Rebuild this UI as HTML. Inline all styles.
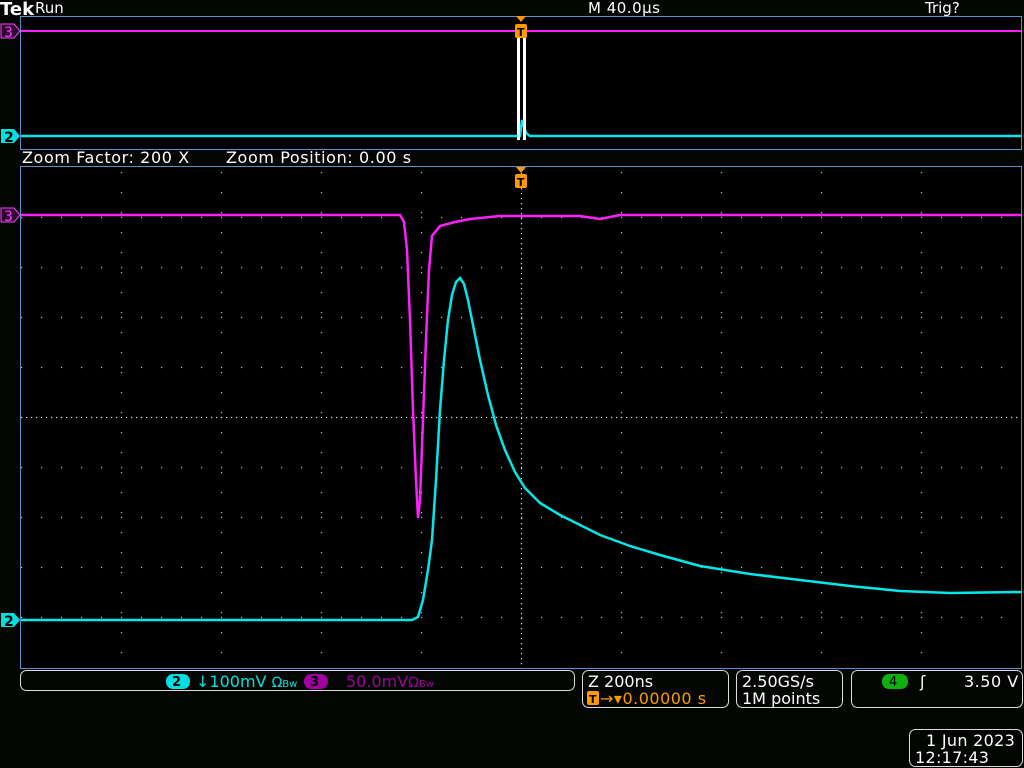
<!DOCTYPE html>
<html><head><style>
html,body{margin:0;padding:0;background:#000;width:1024px;height:768px;overflow:hidden}
svg text{font-family:"DejaVu Sans","Liberation Sans",sans-serif}
</style></head><body>
<svg width="1024" height="768" viewBox="0 0 1024 768" xmlns="http://www.w3.org/2000/svg">
<rect width="1024" height="768" fill="#020502"/>
<!-- top panel -->
<rect x="20.5" y="16.5" width="1001" height="133" fill="#000" stroke="#5a8fc8"/>
<text x="0" y="15" fill="#fff" font-size="18" font-weight="bold" font-family="Liberation Serif">Tek</text>
<text x="35" y="13" fill="#fff" font-size="15">Run</text>
<text x="588" y="13" fill="#fff" font-size="15" letter-spacing="0.5">M 40.0µs</text>
<text x="925" y="13" fill="#fff" font-size="15">Trig?</text>
<line x1="21" y1="31" x2="1021" y2="31" stroke="#ff20ff" stroke-width="2"/>
<polyline points="21,136 520,136 522,120 526,133 530,136 1021,136" fill="none" stroke="#00e8e8" stroke-width="2.5"/>
<rect x="517" y="26" width="3" height="114" fill="#fff"/><rect x="523" y="26" width="3" height="114" fill="#fff"/>
<polygon points="516,16 526,16 521,22" fill="#f90"/>
<rect x="515" y="24" width="12" height="14" rx="2" fill="#f90"/><text x="517" y="36" font-size="11" fill="#000" font-weight="bold">T</text>
<!-- markers -->
<polygon points="1,24 14,24 20,31 14,38 1,38" fill="#300030" stroke="#ff40ff"/><text x="4" y="37" font-size="14" fill="#ff40ff">3</text>
<polygon points="1,129 14,129 20,136 14,143 1,143" fill="#00e0e0"/><text x="4" y="142" font-size="14" fill="#000" font-weight="bold">2</text>
<text x="22" y="163" fill="#fff" font-size="16" letter-spacing="0.6">Zoom Factor: 200 X</text>
<text x="226" y="163" fill="#fff" font-size="16" letter-spacing="0.6">Zoom Position: 0.00 s</text>
<!-- main panel -->
<rect x="20.5" y="166.5" width="1001" height="502" fill="#000" stroke="#5a8fc8"/>
<g stroke="#bbb" stroke-width="1.2" stroke-dasharray="1.2,18.8">
<line x1="121.5" y1="172" x2="121.5" y2="668"/><line x1="221.5" y1="172" x2="221.5" y2="668"/><line x1="321.5" y1="172" x2="321.5" y2="668"/><line x1="421.5" y1="172" x2="421.5" y2="668"/><line x1="621.5" y1="172" x2="621.5" y2="668"/><line x1="721.5" y1="172" x2="721.5" y2="668"/><line x1="821.5" y1="172" x2="821.5" y2="668"/><line x1="921.5" y1="172" x2="921.5" y2="668"/>
</g>
<g stroke="#bbb" stroke-width="1.2" stroke-dasharray="1.2,18.8">
<line x1="21" y1="217.5" x2="1021" y2="217.5"/><line x1="21" y1="267.5" x2="1021" y2="267.5"/><line x1="21" y1="317.5" x2="1021" y2="317.5"/><line x1="21" y1="367.5" x2="1021" y2="367.5"/><line x1="21" y1="467.5" x2="1021" y2="467.5"/><line x1="21" y1="517.5" x2="1021" y2="517.5"/><line x1="21" y1="567.5" x2="1021" y2="567.5"/><line x1="21" y1="617.5" x2="1021" y2="617.5"/>
</g>
<g stroke="#ddd" stroke-width="1.2" stroke-dasharray="1.2,3.8">
<line x1="521.5" y1="168" x2="521.5" y2="668"/><line x1="21" y1="417.5" x2="1021" y2="417.5"/>
</g>
<polyline fill="none" stroke="#ff20ff" stroke-width="2.5" points="21,215 400,215 404,222 407,250 410,320 413,410 416,480 418,518 420,500 423,420 426,340 429,270 432,236 440,226 455,222 470,219 500,216 521,216 580,216 600,219 620,215 1021,215"/>
<polyline fill="none" stroke="#00e8e8" stroke-width="2.5" points="21,620 412,620 418,617 423,600 428,570 432,540 436,480 440,410 444,360 448,320 452,295 456,282 460,278 464,284 468,300 474,330 480,360 488,395 496,425 505,450 515,472 525,488 540,503 560,515 580,525 600,535 630,546 660,555 700,566 750,574 800,580 850,586 900,591 950,593 1021,592"/>
<polygon points="516,167 526,167 521,173" fill="#f90"/>
<rect x="515" y="174" width="12" height="14" rx="2" fill="#f90"/><text x="517" y="186" font-size="11" fill="#000" font-weight="bold">T</text>
<polygon points="1,208 14,208 20,215 14,222 1,222" fill="#300030" stroke="#ff40ff"/><text x="4" y="221" font-size="14" fill="#ff40ff">3</text>
<polygon points="1,613 14,613 20,620 14,627 1,627" fill="#00e0e0"/><text x="4" y="626" font-size="14" fill="#000" font-weight="bold">2</text>
<!-- bottom readouts -->
<rect x="20.5" y="670.5" width="554" height="20" rx="6" fill="none" stroke="#ddd"/>
<rect x="166" y="674" width="24" height="15" rx="7" fill="#00e0e0"/><text x="172" y="686" font-size="13" fill="#000" font-weight="bold">2</text>
<text x="196" y="687" font-size="16" fill="#00e0e0">↓100mV <tspan font-size="14">Ω</tspan><tspan font-size="10">Bw</tspan></text>
<rect x="304" y="674" width="24" height="15" rx="7" fill="#a000a0"/><text x="310" y="686" font-size="13" fill="#000" font-weight="bold">3</text>
<text x="346" y="687" font-size="16" fill="#a000a0">50.0mV<tspan font-size="14">Ω</tspan><tspan font-size="10">Bw</tspan></text>
<rect x="582.5" y="670.5" width="146" height="37" rx="6" fill="none" stroke="#ddd"/>
<text x="588" y="687" font-size="16" fill="#fff">Z 200ns</text>
<rect x="587" y="691" width="12" height="14" rx="2" fill="#f90"/><text x="589" y="703" font-size="11" fill="#000" font-weight="bold">T</text>
<text x="600" y="704" font-size="16" fill="#f90" letter-spacing="0.5">→▾0.00000 s</text>
<rect x="736.5" y="670.5" width="106" height="37" rx="6" fill="none" stroke="#ddd"/>
<text x="742" y="687" font-size="16" fill="#fff">2.50GS/s</text>
<text x="742" y="704" font-size="16" fill="#fff">1M points</text>
<rect x="851.5" y="670.5" width="171" height="37" rx="6" fill="none" stroke="#ddd"/>
<rect x="882" y="674" width="26" height="15" rx="7" fill="#10b010"/><text x="889" y="686" font-size="13" fill="#000">4</text>
<text x="920" y="687" font-size="16" fill="#fff">ʃ</text>
<text x="964" y="687" font-size="16" fill="#fff" letter-spacing="0.5">3.50 V</text>
<rect x="909.5" y="729.5" width="113" height="37" rx="6" fill="none" stroke="#ddd"/>
<text x="926" y="746" font-size="16" fill="#fff" letter-spacing="0.3">1 Jun 2023</text>
<text x="915" y="763" font-size="16" fill="#fff" letter-spacing="0.3">12:17:43</text>
</svg>
</body></html>
